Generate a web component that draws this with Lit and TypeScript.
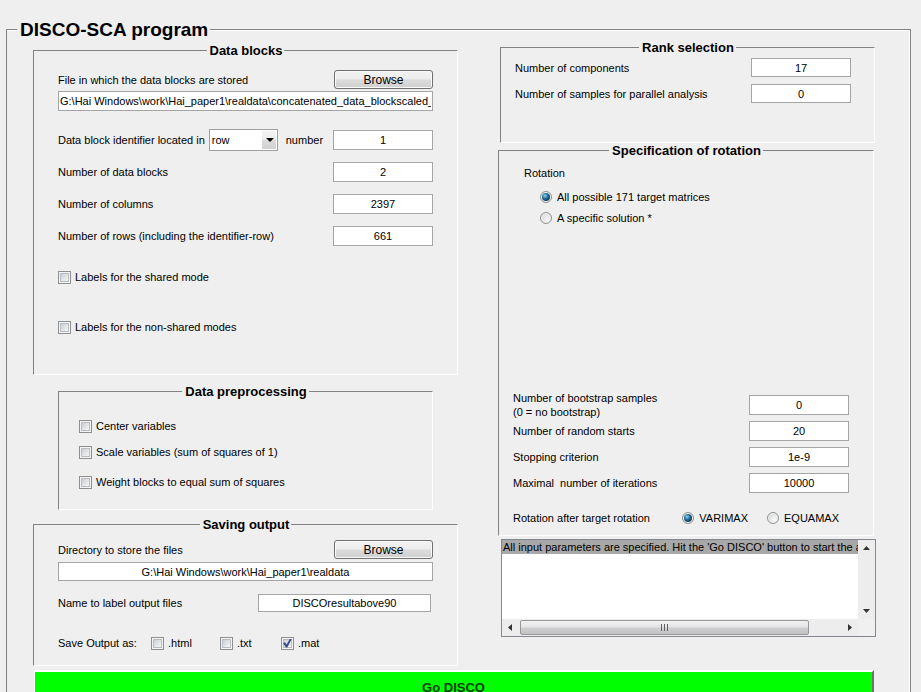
import { LitElement, html, css } from "lit";
import { customElement, state } from "lit/decorators.js";

@customElement("app-root")
export class AppRoot extends LitElement {
  static styles = css`
    :host {
      display: block;
      box-sizing: border-box;
      height: 100vh;
      overflow: auto;
      scrollbar-width: none;
      padding: 19px 10px 0 6px;
      background: #efefef;
      color: #000;
      font: 11px/14px "Liberation Sans", Arial, sans-serif;
    }
    * {
      box-sizing: border-box;
    }
    fieldset {
      margin: 0;
      min-width: 0;
      border: 1px solid;
      border-color: #828282 #fff #fff #828282;
      padding: 0 24px;
    }
    legend {
      margin: 0 auto;
      padding: 0 2px 0 3px;
      font-size: 13px;
      line-height: 15px;
      font-weight: bold;
    }
    .program {
      border-color: #828282;
      box-shadow: inset -1px 1px 0 #fff;
      padding: 0;
    }
    .program > legend {
      margin: 0 0 0 10px;
      padding: 0 2px 0 3px;
      background: #efefef;
      font-size: 19px;
      line-height: 21px;
    }
    .body {
      padding: 0 34px 20px 26px;
    }
    .columns {
      display: grid;
      grid-template-columns: minmax(0, 425fr) minmax(0, 378fr);
      column-gap: 40px;
      align-items: start;
    }
    .left {
      padding-top: 3px;
    }
    .row {
      display: flex;
      align-items: center;
      justify-content: space-between;
    }
    .group {
      display: flex;
      align-items: center;
    }
    .stack {
      display: grid;
    }
    input,
    button,
    select {
      margin: 0;
      font: inherit;
      color: inherit;
      border-radius: 0;
    }
    .field {
      display: block;
      width: 100px;
      height: 20px;
      padding: 0 1px;
      border: 1px solid #a5a5a5;
      background: #fff;
      text-align: center;
      outline: none;
    }
    .field.wide {
      width: 100%;
    }
    .field.path {
      text-align: left;
    }
    .field.name {
      width: 173px;
      height: 18px;
      margin-right: 2px;
    }
    .short .field {
      height: 19px;
    }
    .browse {
      width: 99px;
      height: 19px;
      padding: 0;
      border: 1px solid #707070;
      border-radius: 3px;
      background: linear-gradient(#f3f3f3, #ececec 48%, #dcdcdc 52%, #cfcfcf);
      box-shadow: inset 0 0 0 1px #fafafa;
      font-size: 12px;
    }
    .blocks {
      padding-top: 12px;
      padding-bottom: 40px;
    }
    .blocks .path {
      margin-top: 2px;
    }
    .numbers {
      margin-top: 18px;
      row-gap: 11px;
    }
    .numbers .row {
      height: 21px;
    }
    .picker {
      display: grid;
      width: 69px;
      height: 22px;
      margin: 0 8px 0 4px;
    }
    .picker > * {
      grid-area: 1 / 1;
    }
    .picker select {
      appearance: none;
      width: 100%;
      padding: 0 0 0 2px;
      border: 1px solid #a0a0a0;
      background: linear-gradient(#f2f2f2, #ececec 48%, #dcdcdc 52%, #d0d0d0) no-repeat
          right 1px center / 14px 18px,
        #fff;
    }
    .arrow {
      justify-self: end;
      align-self: center;
      margin-right: 4px;
      pointer-events: none;
    }
    .tick {
      display: flex;
      align-items: center;
      width: fit-content;
      height: 14px;
    }
    .labels {
      margin-top: 24px;
      row-gap: 36px;
    }
    .prep {
      margin: 9px 25px 0;
      padding: 20px 20px;
    }
    .prep .tick + .tick {
      margin-top: 12px;
    }
    .prep .tick + .tick + .tick {
      margin-top: 16px;
    }
    input[type="checkbox"],
    input[type="radio"] {
      appearance: none;
      display: grid;
      place-items: center;
      flex: none;
      width: 13px;
      height: 13px;
      border: 1px solid #8e8f8f;
    }
    input[type="checkbox"] {
      margin-right: 4px;
      background: linear-gradient(135deg, #cbcfd5, #f6f6f6) content-box, #f4f4f4;
      padding: 2px;
      box-shadow: inset 0 0 0 1px #f4f4f4, inset 0 0 0 2px #b9bcc2;
    }
    input[type="checkbox"]:checked::before {
      content: "";
      width: 9px;
      height: 9px;
      margin: -1px;
      background: #3b4f8f;
      clip-path: polygon(0 50%, 22% 42%, 40% 66%, 78% 0, 100% 0, 48% 100%, 32% 100%);
    }
    input[type="radio"] {
      width: 12px;
      height: 12px;
      margin-right: 5px;
      border-radius: 50%;
      background: radial-gradient(circle at 65% 65%, #fafafa, #c9ccd0);
      box-shadow: inset 0 0 0 1px #f4f4f4;
    }
    input[type="radio"]:checked::before {
      content: "";
      width: 8px;
      height: 8px;
      border-radius: 50%;
      background: radial-gradient(circle at 38% 35%, #8fd8f4 0, #23709b 38%, #0d3350 80%);
    }
    .saving {
      margin-top: 7px;
      padding-top: 8px;
      padding-bottom: 15px;
    }
    .saving .wide {
      height: 19px;
      margin-top: 3px;
    }
    .naming {
      margin-top: 13px;
    }
    .formats {
      display: grid;
      grid-template-columns: 93px 69px 61px auto;
      margin-top: 24px;
    }
    .rank {
      margin: 0 1px 0 2px;
      padding: 3px 14px 39px;
    }
    .rank .stack {
      row-gap: 7px;
      margin-right: 9px;
    }
    .rotation {
      margin-right: 2px;
      padding: 8px 14px 10px;
    }
    .targets {
      min-height: 225px;
      padding-left: 11px;
      align-content: start;
      row-gap: 7px;
    }
    .targets .heading {
      margin-bottom: 3px;
    }
    .targets .tick {
      margin-left: 16px;
    }
    .settings {
      row-gap: 6px;
      margin-right: 10px;
    }
    .settings .row:first-child {
      margin-bottom: -4px;
    }
    .after {
      margin-top: 18px;
    }
    .after .group {
      gap: 19px;
      margin-right: 20px;
    }
    .log {
      display: grid;
      grid-template: minmax(0, 1fr) 17px / minmax(0, 1fr) 17px;
      height: 98px;
      margin: 3px 0 0 3px;
      border: 1px solid #828790;
      background: #f0f0f0;
    }
    .lines {
      margin: 0;
      padding: 0;
      list-style: none;
      background: #fff;
      overflow: hidden;
      white-space: nowrap;
    }
    .lines li {
      padding-left: 1px;
      background: #a8a8a8;
    }
    .bar {
      display: flex;
      justify-content: space-between;
      background: #ededed;
    }
    .bar.down {
      flex-direction: column;
    }
    .bar button {
      display: grid;
      place-items: center;
      width: 17px;
      height: 17px;
      padding: 0;
      border: 0;
      background: none;
    }
    .track {
      flex: 1;
      display: flex;
      padding: 1px 0 1px 1px;
    }
    .thumb {
      display: flex;
      align-items: center;
      justify-content: center;
      gap: 2px;
      width: 90%;
      border: 1px solid #979797;
      border-radius: 2px;
      background: linear-gradient(#f2f2f2, #e4e4e6 48%, #cfcfd2 52%, #c2c2c6);
    }
    .thumb i {
      width: 1px;
      height: 7px;
      background: #606060;
    }
    .go {
      display: block;
      width: calc(100% - 3px);
      height: 36px;
      margin: 4px 2px 0 1px;
      padding: 0;
      border: 1px solid;
      border-width: 2px 2px 2px 1px;
      border-color: #fff #707070 #707070 #fff;
      background: #0f0;
      color: #063c06;
      font-size: 13px;
      font-weight: bold;
    }
  `;

  @state() private target = "all";
  @state() private criterion = "varimax";

  private number(id: string, label: unknown, value: string) {
    return html`<div class="row">
      <label for=${id}>${label}</label>
      <input class="field" id=${id} type="text" .value=${value} />
    </div>`;
  }

  private tick(label: string, checked = false) {
    return html`<label class="tick"
      ><input type="checkbox" ?checked=${checked} />${label}</label
    >`;
  }

  private radio(name: "target" | "criterion", value: string, label: string) {
    return html`<label class="tick"
      ><input
        type="radio"
        name=${name}
        .checked=${this[name] === value}
        @change=${() => (this[name] = value)}
      />${label}</label
    >`;
  }

  private scrollButton(name: string, points: string) {
    return html`<button type="button" aria-label=${name}>
      <svg width="7" height="7" viewBox="0 0 7 7"><polygon points=${points} fill="#333" /></svg>
    </button>`;
  }

  private dataBlocks() {
    return html`<fieldset class="blocks">
      <legend>Data blocks</legend>
      <div class="row">
        <label for="file">File in which the data blocks are stored</label>
        <button class="browse" type="button">Browse</button>
      </div>
      <input
        class="field wide path"
        id="file"
        type="text"
        .value=${"G:\\Hai Windows\\work\\Hai_paper1\\realdata\\concatenated_data_blockscaled_"}
      />
      <div class="stack numbers">
        <div class="row">
          <div class="group">
            <label for="axis">Data block identifier located in</label>
            <div class="picker">
              <select id="axis">
                <option>row</option>
                <option>column</option>
              </select>
              <svg class="arrow" width="8" height="4" viewBox="0 0 8 4">
                <polygon points="0,0 8,0 4,4" fill="#000" />
              </svg>
            </div>
            <label for="index">number</label>
          </div>
          <input class="field" id="index" type="text" .value=${"1"} />
        </div>
        ${this.number("blocks", "Number of data blocks", "2")}
        ${this.number("cols", "Number of columns", "2397")}
        ${this.number("rows", "Number of rows (including the identifier-row)", "661")}
      </div>
      <div class="stack labels">
        ${this.tick("Labels for the shared mode")} ${this.tick("Labels for the non-shared modes")}
      </div>
    </fieldset>`;
  }

  private preprocessing() {
    return html`<fieldset class="prep">
      <legend>Data preprocessing</legend>
      ${this.tick("Center variables")} ${this.tick("Scale variables (sum of squares of 1)")}
      ${this.tick("Weight blocks to equal sum of squares")}
    </fieldset>`;
  }

  private saving() {
    return html`<fieldset class="saving">
      <legend>Saving output</legend>
      <div class="row">
        <label for="dir">Directory to store the files</label>
        <button class="browse" type="button">Browse</button>
      </div>
      <input
        class="field wide"
        id="dir"
        type="text"
        .value=${"G:\\Hai Windows\\work\\Hai_paper1\\realdata"}
      />
      <div class="row naming">
        <label for="name">Name to label output files</label>
        <input class="field name" id="name" type="text" .value=${"DISCOresultabove90"} />
      </div>
      <div class="formats">
        <span>Save Output as:</span>
        ${this.tick(".html")} ${this.tick(".txt")} ${this.tick(".mat", true)}
      </div>
    </fieldset>`;
  }

  private rank() {
    return html`<fieldset class="rank">
      <legend>Rank selection</legend>
      <div class="stack short">
        ${this.number("components", "Number of components", "17")}
        ${this.number("samples", "Number of samples for parallel analysis", "0")}
      </div>
    </fieldset>`;
  }

  private rotation() {
    return html`<fieldset class="rotation">
      <legend>Specification of rotation</legend>
      <div class="stack targets">
        <span class="heading">Rotation</span>
        ${this.radio("target", "all", "All possible 171 target matrices")}
        ${this.radio("target", "specific", "A specific solution *")}
      </div>
      <div class="stack settings">
        ${this.number(
          "bootstrap",
          html`Number of bootstrap samples<br />(0 = no bootstrap)`,
          "0"
        )}
        ${this.number("starts", "Number of random starts", "20")}
        ${this.number("stop", "Stopping criterion", "1e-9")}
        ${this.number("iterations", html`Maximal&nbsp; number of iterations`, "10000")}
      </div>
      <div class="row after">
        <span>Rotation after target rotation</span>
        <div class="group">
          ${this.radio("criterion", "varimax", "VARIMAX")}
          ${this.radio("criterion", "equamax", "EQUAMAX")}
        </div>
      </div>
    </fieldset>`;
  }

  private log() {
    return html`<div class="log">
      <ul class="lines">
        <li>
          All input parameters are specified. Hit the 'Go DISCO' button to start the analysis
        </li>
      </ul>
      <div class="bar down">
        ${this.scrollButton("Scroll up", "0,5 3.5,1 7,5")}
        ${this.scrollButton("Scroll down", "0,2 3.5,6 7,2")}
      </div>
      <div class="bar">
        ${this.scrollButton("Scroll left", "5,0 1,3.5 5,7")}
        <div class="track">
          <div class="thumb"><i></i><i></i><i></i></div>
        </div>
        ${this.scrollButton("Scroll right", "2,0 6,3.5 2,7")}
      </div>
    </div>`;
  }

  render() {
    return html`<fieldset class="program">
      <legend>DISCO-SCA program</legend>
      <div class="body">
        <div class="columns">
          <div class="left">${this.dataBlocks()} ${this.preprocessing()} ${this.saving()}</div>
          <div class="right">${this.rank()} ${this.rotation()} ${this.log()}</div>
        </div>
        <button class="go" type="button">Go DISCO</button>
      </div>
    </fieldset>`;
  }
}
